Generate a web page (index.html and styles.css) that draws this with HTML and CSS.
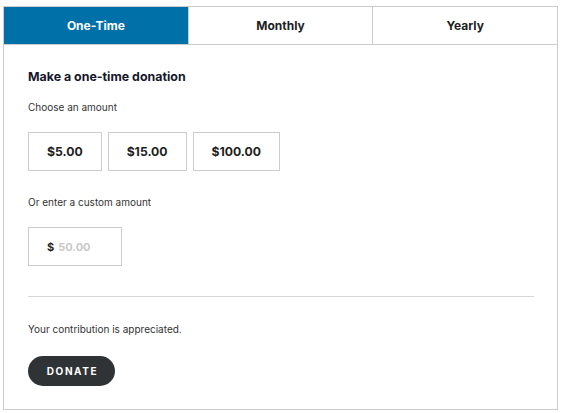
FILE: index.html
```html
<!DOCTYPE html>
<html>
<head>
<meta charset="utf-8">
<link rel="stylesheet" href="styles.css">
</head>
<body>
<div class="donate-box">
  <div class="tabs">
    <div class="tab active">One-Time</div>
    <div class="tab">Monthly</div>
    <div class="tab">Yearly</div>
  </div>
  <div class="panel">
    <h2 class="title">Make a one-time donation</h2>
    <p class="label">Choose an amount</p>
    <div class="amounts">
      <div class="amount">$5.00</div>
      <div class="amount">$15.00</div>
      <div class="amount">$100.00</div>
    </div>
    <p class="label custom-label">Or enter a custom amount</p>
    <div class="custom"><span class="cur">$</span><span class="ph">50.00</span></div>
    <hr class="divider">
    <p class="label thanks">Your contribution is appreciated.</p>
    <button class="donate">DONATE</button>
  </div>
</div>
</body>
</html>
```
FILE: styles.css
```css
* { box-sizing: border-box; }
html, body { margin: 0; background: #fff; }
body {
  padding: 6px 6px 0 3px;
  font-family: Inter, "Liberation Sans", sans-serif;
  color: #1e1e1e;
}
.donate-box {
  width: 555px;
  height: 404px;
  border: 1px solid #cccccc;
  display: flex;
  flex-direction: column;
}
.tabs {
  display: flex;
  height: 38px;
  border-bottom: 1px solid #cccccc;
}
.tab {
  flex: 1;
  display: flex;
  align-items: center;
  justify-content: center;
  font-size: 12px;
  font-weight: 700;
  color: #1e1e1e;
  border-left: 1px solid #cccccc;
}
.tab:first-child { border-left: none; }
.tab.active { background: #0071a8; color: #fff; }
.panel {
  padding: 24px 23px 0 24px;
}
.title {
  margin: 0;
  font-size: 12.4px;
  font-weight: 700;
  color: #15172b;
  line-height: 16px;
}
.label {
  margin: 15px 0 0;
  font-size: 10px;
  line-height: 14px;
  color: #333;
}
.amounts {
  display: flex;
  gap: 6px;
  margin-top: 18px;
}
.amount {
  height: 39px;
  padding: 0 18px;
  border: 1px solid #cccccc;
  display: flex;
  align-items: center;
  justify-content: center;
  font-size: 12.2px;
  font-weight: 700;
  color: #1e1e1e;
}
.custom-label { margin-top: 24px; }
.custom {
  margin-top: 18px;
  width: 94px;
  height: 39px;
  border: 1px solid #cccccc;
  display: flex;
  align-items: center;
  padding-left: 18px;
  font-size: 11px;
  font-weight: 700;
}
.cur { color: #1e1e1e; margin-right: 4px; }
.ph { color: #c8c8c8; }
.divider {
  margin: 30px 0 0;
  border: none;
  border-top: 1px solid #d6d6d6;
  height: 0;
}
.thanks { margin-top: 25px; }
.donate {
  margin-top: 20px;
  width: 87px;
  height: 30px;
  border: none;
  border-radius: 15px;
  background: #2f3336;
  color: #fff;
  font-family: Inter, "Liberation Sans", sans-serif;
  font-size: 10px;
  font-weight: 700;
  letter-spacing: 1.6px;
  padding: 0 0 0 2px;
}
```
